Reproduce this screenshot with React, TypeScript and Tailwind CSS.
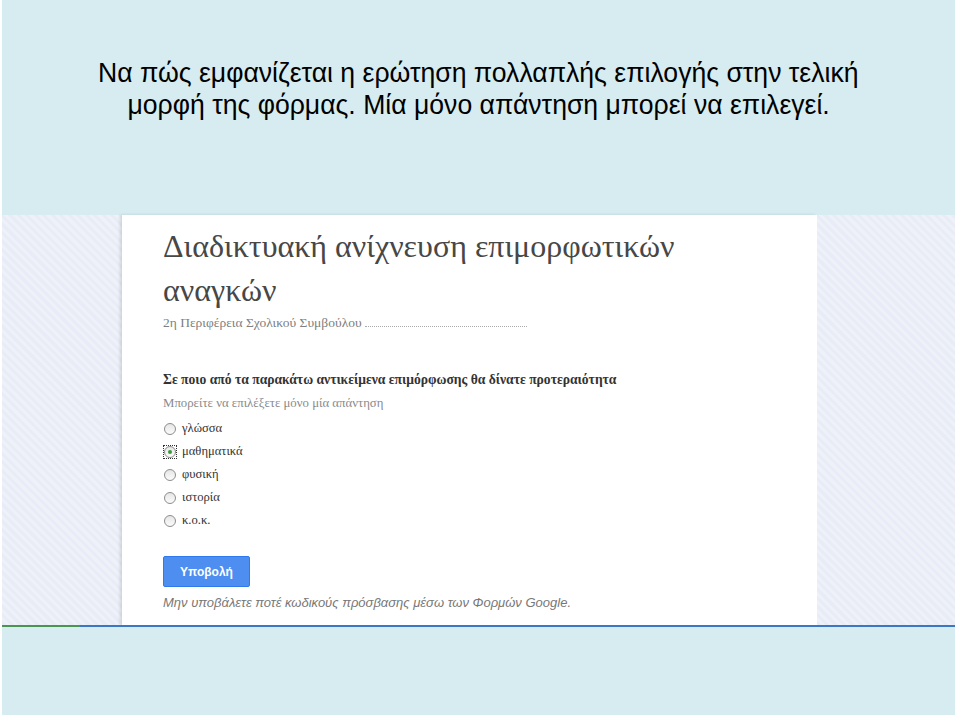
export default function App() {
  const options = ['γλώσσα', 'μαθηματικά', 'φυσική', 'ιστορία', 'κ.ο.κ.'];
  const stripes =
    'bg-[repeating-linear-gradient(45deg,#e8ecf6_0px,#e8ecf6_3px,#eef1f8_3px,#eef1f8_6px)]';

  return (
    <div className="flex h-[715px] w-[960px] bg-white">
      <div className="ml-[2px] flex w-[953px] flex-col bg-[#d6ecf0]">
        {/* slide title */}
        <div className="flex h-[215px] flex-col items-center pt-[57px] font-['Liberation_Sans',sans-serif] text-[28px] leading-[32px] text-black">
          <p className="scale-x-[0.95] whitespace-nowrap">
            Να πώς εμφανίζεται η ερώτηση πολλαπλής επιλογής στην τελική
          </p>
          <p className="scale-x-[0.95] whitespace-nowrap">
            μορφή της φόρμας. Μία μόνο απάντηση μπορεί να επιλεγεί.
          </p>
        </div>

        {/* screenshot of the form */}
        <div className="flex h-[410px]">
          <div className={`w-[120px] ${stripes}`} />
          <div className="w-[695px] bg-white pl-[41px] pt-[9px] shadow-[-2px_0_3px_rgba(0,0,0,0.12)]">
            <h1 className="font-['Liberation_Serif',serif] text-[32px] leading-[44px] text-[#474747]">
              Διαδικτυακή ανίχνευση επιμορφωτικών
              <br />
              αναγκών
            </h1>
            <div className="mt-[3px] flex items-end font-['Liberation_Serif',serif] text-[13.5px] leading-[16px] text-[#808080]">
              <span>2η Περιφέρεια Σχολικού Συμβούλου</span>
              <span className="mb-[4px] ml-[3px] w-[162px] border-b border-dotted border-[#aaa]" />
            </div>

            <p className="mt-[41px] font-['Liberation_Serif',serif] text-[13.6px] font-bold leading-[16px] text-[#333]">
              Σε ποιο από τα παρακάτω αντικείμενα επιμόρφωσης θα δίνατε προτεραιότητα
            </p>
            <p className="mt-[7px] font-['Liberation_Serif',serif] text-[12.8px] leading-[16px] text-[#8a8a8a]">
              Μπορείτε να επιλέξετε μόνο μία απάντηση
            </p>

            <div className="mt-[6px] flex flex-col">
              {options.map((o, i) => (
                <div key={o} className="flex h-[23px] items-center gap-[5px]">
                  <span
                    className={`flex h-[14px] w-[14px] items-center justify-center ${
                      i === 1 ? 'border border-dotted border-[#333]' : ''
                    }`}
                  >
                    <span className="flex h-[12px] w-[12px] items-center justify-center rounded-full border border-[#8d8d8d] bg-[linear-gradient(#e6e6e6,#fbfbfb)]">
                      {i === 1 && <span className="h-[4px] w-[4px] rounded-full bg-[#3a9a3a]" />}
                    </span>
                  </span>
                  <span className="font-['Liberation_Serif',serif] text-[12.6px] text-[#333]">{o}</span>
                </div>
              ))}
            </div>

            <button className="mt-[24px] flex h-[31px] w-[87px] items-center justify-center rounded-[2px] border border-[#3079ed] bg-[#4d8ef0] font-['Liberation_Sans',sans-serif] text-[12px] font-bold text-white">
              Υποβολή
            </button>
            <p className="mt-[8px] font-['Liberation_Sans',sans-serif] text-[13px] italic leading-[16px] text-[#777]">
              Μην υποβάλετε ποτέ κωδικούς πρόσβασης μέσω των Φορμών Google.
            </p>
          </div>
          <div className={`flex-1 ${stripes}`} />
        </div>

        {/* bottom bar of the screenshot */}
        <div className="flex h-[2px]">
          <div className="w-[78px] bg-[#4c9452]" />
          <div className="flex-1 bg-[#3b78c4]" />
        </div>
        <div className="flex-1" />
      </div>
    </div>
  );
}
